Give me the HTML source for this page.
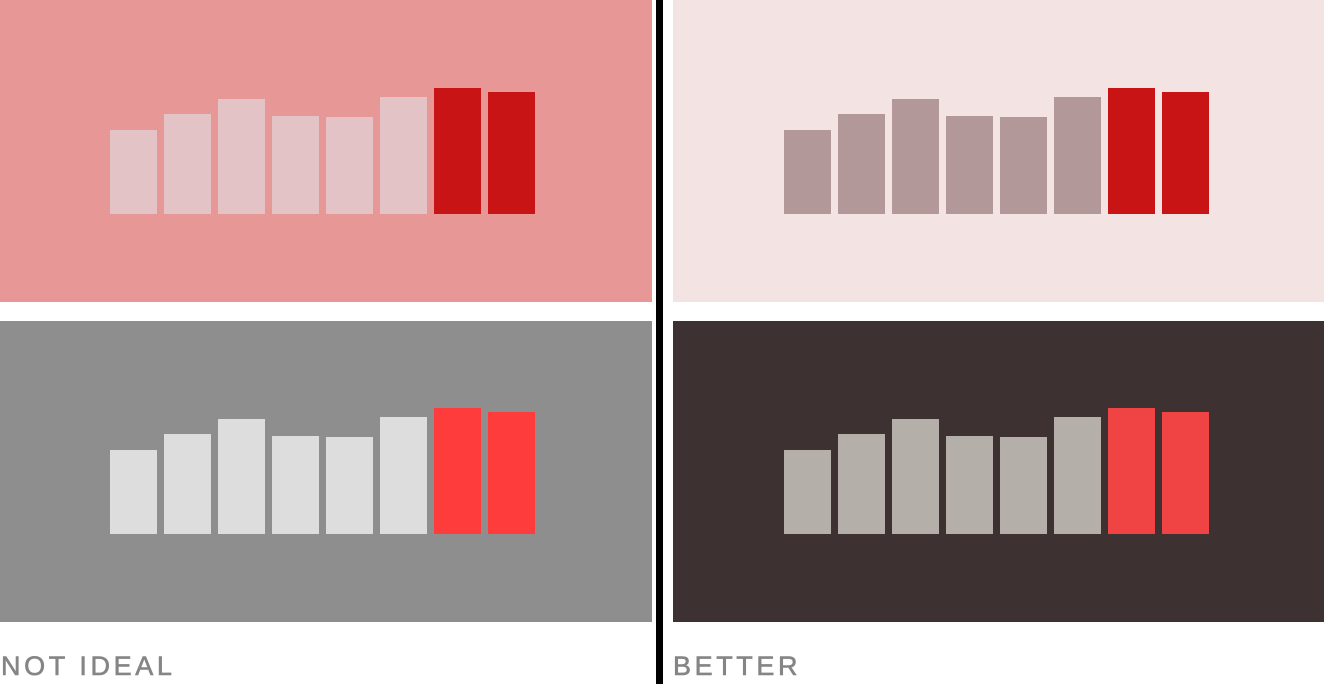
<!DOCTYPE html>
<html><head><style>
body{margin:0;width:1324px;height:684px;background:#fff;position:relative;overflow:hidden;font-family:"Liberation Sans",sans-serif}
div{position:absolute}
.b{width:47px}
.t{font-size:27px;color:#858585;letter-spacing:3.6px;top:651px;-webkit-text-stroke:0.6px #858585}
</style></head><body>
<div style="left:0;top:0;width:652px;height:302px;background:#e89797"></div>
<div style="left:0;top:321px;width:652px;height:301px;background:#8e8e8e"></div>
<div style="left:673px;top:0;width:651px;height:302px;background:#f4e3e3"></div>
<div style="left:673px;top:321px;width:651px;height:301px;background:#3d3132"></div>
<div style="left:656px;top:0;width:7px;height:684px;background:#000"></div>
<div id="c"></div>
<div class="t" style="left:1px">NOT IDEAL</div>
<div class="t" style="left:673px">BETTER</div>
<script>
var tops=[130,114,99,116,117,97,88,92];
var sets=[[0,0,'#e3c3c5','#c81414'],[0,320,'#dddddd','#ff3c3c'],[674,0,'#b29899','#c81414'],[674,320,'#b5afaa','#f04444']];
var h='';
sets.forEach(function(s){tops.forEach(function(t,i){
h+='<div class="b" style="left:'+(110+54*i+s[0])+'px;top:'+(t+s[1])+'px;height:'+(214-t)+'px;background:'+(i>5?s[3]:s[2])+'"></div>';});});
document.getElementById('c').outerHTML=h;
</script>
</body></html>
